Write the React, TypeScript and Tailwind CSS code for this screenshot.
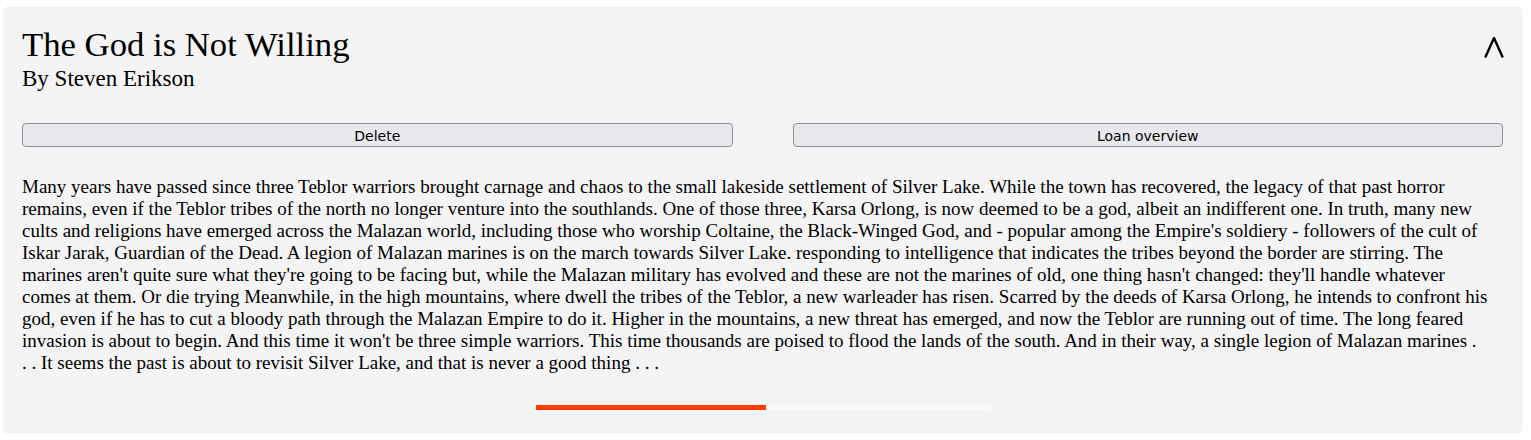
import * as React from "react";

// Book card — title, author, action buttons, blurb and a loan progress bar.

// Blurb kept as the lines the original layout breaks it into.
const BLURB_LINES = [
  "Many years have passed since three Teblor warriors brought carnage and chaos to the small lakeside settlement of Silver Lake. While the town has recovered, the legacy of that past horror",
  "remains, even if the Teblor tribes of the north no longer venture into the southlands. One of those three, Karsa Orlong, is now deemed to be a god, albeit an indifferent one. In truth, many new",
  "cults and religions have emerged across the Malazan world, including those who worship Coltaine, the Black-Winged God, and - popular among the Empire's soldiery - followers of the cult of",
  "Iskar Jarak, Guardian of the Dead. A legion of Malazan marines is on the march towards Silver Lake. responding to intelligence that indicates the tribes beyond the border are stirring. The",
  "marines aren't quite sure what they're going to be facing but, while the Malazan military has evolved and these are not the marines of old, one thing hasn't changed: they'll handle whatever",
  "comes at them. Or die trying Meanwhile, in the high mountains, where dwell the tribes of the Teblor, a new warleader has risen. Scarred by the deeds of Karsa Orlong, he intends to confront his",
  "god, even if he has to cut a bloody path through the Malazan Empire to do it. Higher in the mountains, a new threat has emerged, and now the Teblor are running out of time. The long feared",
  "invasion is about to begin. And this time it won't be three simple warriors. This time thousands are poised to flood the lands of the south. And in their way, a single legion of Malazan marines .",
  ". . It seems the past is about to revisit Silver Lake, and that is never a good thing . . .",
];

function CollapseIcon() {
  return (
    <svg width="20" height="21" viewBox="0 0 20 21" aria-hidden>
      <polyline points="1.2,20.5 10,1 18.8,20.5" fill="none" stroke="#000" strokeWidth="2.4" />
    </svg>
  );
}

function ActionButton({ label }: { label: string }) {
  return (
    <button
      type="button"
      className="h-6 flex-1 rounded-[4px] border border-[#8f8f9d] bg-[#e9e9ed] pt-px text-[14px] leading-none text-black [font-family:'DejaVu_Sans',sans-serif]"
    >
      {label}
    </button>
  );
}

export default function App() {
  const progress = 0.508;
  return (
    <div className="bg-white pt-[6px] pl-[3px] pr-[8px] pb-[6px]">
      <div className="rounded-[6px] bg-[#f4f4f4] pt-[19px] pl-[19px] pr-[20px] pb-[24px] text-black [font-family:'Liberation_Serif',serif]">
        <div className="flex items-start justify-between">
          <div>
            <h1 className="text-[34.7px] leading-[40px]">The God is Not Willing</h1>
            <p className="text-[23px] leading-[28px]">By Steven Erikson</p>
          </div>
          <div className="mt-[12px] mr-[-1px]">
            <CollapseIcon />
          </div>
        </div>

        <div className="mt-[30px] flex gap-[60px]">
          <ActionButton label="Delete" />
          <ActionButton label="Loan overview" />
        </div>

        <p className="mt-[29px] text-[19px] leading-[22px]">
          {BLURB_LINES.map((line, i) => (
            <React.Fragment key={i}>
              {i > 0 && <br />}
              {line}
            </React.Fragment>
          ))}
        </p>

        <div className="mx-auto mt-[31px] h-[5px] w-[453px] bg-[#f9f9f9]">
          <div className="h-full bg-[#ff3d00]" style={{ width: `${progress * 100}%` }} />
        </div>
      </div>
    </div>
  );
}
